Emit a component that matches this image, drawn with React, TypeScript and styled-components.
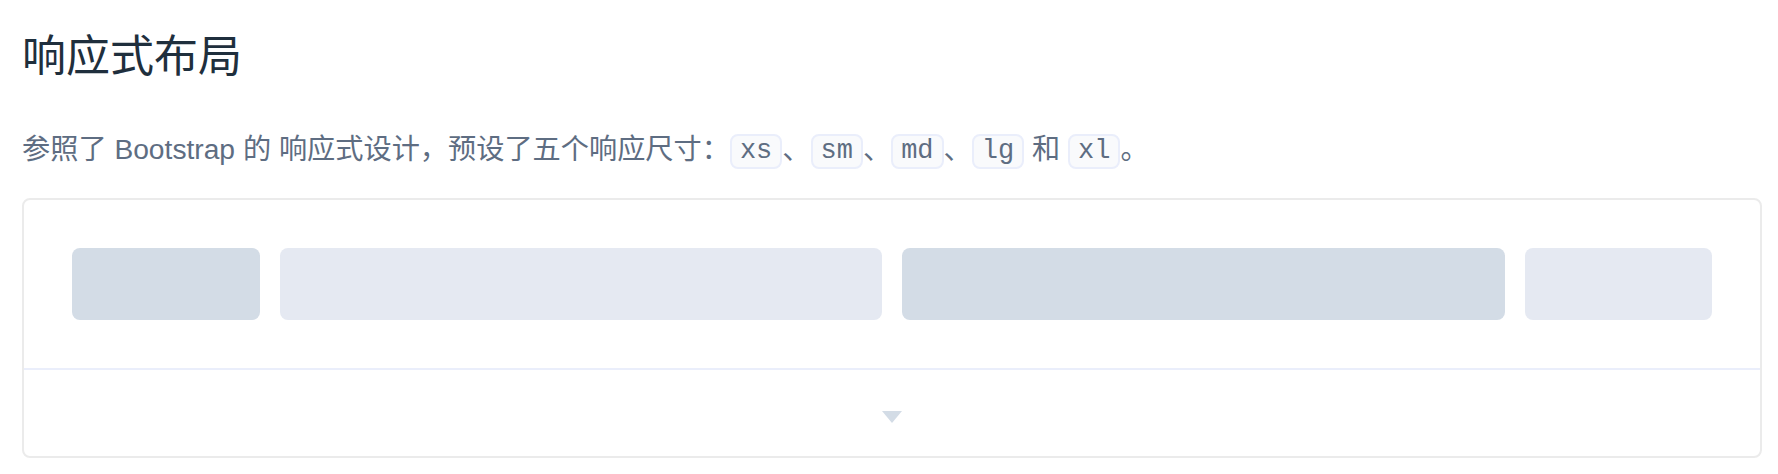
import React from 'react';
import styled, { createGlobalStyle } from 'styled-components';

const GlobalStyle = createGlobalStyle`
  html, body {
    margin: 0;
    padding: 0;
    background: #fff;
  }
  body {
    font-family: "Liberation Sans", "Noto Sans CJK SC", sans-serif;
  }
`;

const Page = styled.div`
  padding: 35px 16px 0 22px;
`;

const Title = styled.h3`
  margin: 0;
  font-size: 44px;
  line-height: 44px;
  font-weight: 400;
  color: #1f2f3d;
`;

const Desc = styled.p`
  margin: 49px 0 0;
  font-size: 28.2px;
  line-height: 42px;
  color: #5e6d82;
`;

const Code = styled.code`
  display: inline-block;
  box-sizing: border-box;
  height: 35px;
  line-height: 31px;
  padding: 0 8px;
  vertical-align: 1px;
  font-family: "Liberation Mono", "DejaVu Sans Mono", monospace;
  font-size: 27px;
  color: #5e6d82;
  background: #f9fafc;
  border: 2px solid #eaeefb;
  border-radius: 8px;
`;

const DemoBlock = styled.div`
  margin-top: 28px;
  width: 1740px;
  box-sizing: border-box;
  border: 2px solid #ebebeb;
  border-radius: 8px;
`;

const Source = styled.div`
  padding: 48px 48px 48px;
`;

const Row = styled.div`
  display: flex;
  margin: 0 -10px;
`;

const Col = styled.div<{ $span: number }>`
  box-sizing: border-box;
  width: ${({ $span }) => ($span / 24) * 100}%;
  padding: 0 10px;
`;

const Cell = styled.div<{ $dark?: boolean }>`
  height: 72px;
  border-radius: 8px;
  background: ${({ $dark }) => ($dark ? '#d3dce6' : '#e5e9f2')};
`;

const Control = styled.div`
  height: 88px;
  border-top: 2px solid #eaeefb;
  display: flex;
  align-items: center;
  justify-content: center;
  padding-top: 8px;
  box-sizing: border-box;
`;

const Caret = styled.span`
  width: 0;
  height: 0;
  border-left: 10px solid transparent;
  border-right: 10px solid transparent;
  border-top: 12px solid #d3dce6;
`;

const cols = [
  { span: 3, dark: true },
  { span: 9, dark: false },
  { span: 9, dark: true },
  { span: 3, dark: false },
];

export default function App() {
  return (
    <>
      <GlobalStyle />
      <Page>
        <Title>响应式布局</Title>
        <Desc>
          参照了 Bootstrap 的 响应式设计，预设了五个响应尺寸：<Code>xs</Code>、<Code>sm</Code>、<Code>md</Code>、<Code>lg</Code> 和 <Code>xl</Code>。
        </Desc>
        <DemoBlock>
          <Source>
            <Row>
              {cols.map((c, i) => (
                <Col key={i} $span={c.span}>
                  <Cell $dark={c.dark} />
                </Col>
              ))}
            </Row>
          </Source>
          <Control>
            <Caret />
          </Control>
        </DemoBlock>
      </Page>
    </>
  );
}
